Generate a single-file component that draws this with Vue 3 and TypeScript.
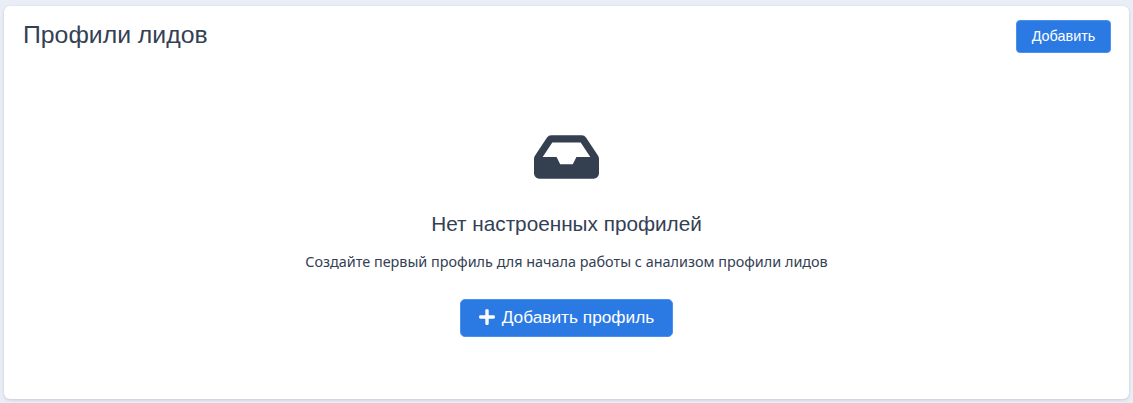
<script setup lang="ts">
const title = 'Профили лидов'
</script>

<template>
  <div class="page">
    <section class="card">
      <header class="card-header">
        <h1 class="card-title">{{ title }}</h1>
        <button class="btn btn--small" type="button">Добавить</button>
      </header>
      <div class="empty">
        <svg class="empty-icon" viewBox="0 0 576 512" aria-hidden="true">
          <path fill="currentColor" d="M567.938 243.908L462.25 85.374A48.003 48.003 0 0 0 422.311 64H153.689a48 48 0 0 0-39.938 21.374L8.062 243.908A47.994 47.994 0 0 0 0 270.533V400c0 26.51 21.49 48 48 48h480c26.51 0 48-21.49 48-48V270.533a47.994 47.994 0 0 0-8.062-26.625zM162.252 128h251.497l85.333 128H376l-32 64H232l-32-64H76.918l85.334-128z" />
        </svg>
        <h2 class="empty-title">Нет настроенных профилей</h2>
        <p class="empty-text">Создайте первый профиль для начала работы с анализом профили лидов</p>
        <button class="btn btn--large" type="button">
          <svg class="btn-icon" viewBox="0 0 448 512" aria-hidden="true">
            <path fill="currentColor" d="M416 208H272V64c0-17.67-14.33-32-32-32h-32c-17.67 0-32 14.33-32 32v144H32c-17.67 0-32 14.33-32 32v32c0 17.67 14.33 32 32 32h144v144c0 17.67 14.33 32 32 32h32c17.67 0 32-14.33 32-32V304h144c17.67 0 32-14.33 32-32v-32c0-17.67-14.33-32-32-32z" />
          </svg>
          Добавить профиль
        </button>
      </div>
    </section>
  </div>
</template>

<style>
html,
body {
  margin: 0;
  background: #e9edf5;
}
</style>

<style scoped>
.page {
  height: 403px;
  box-sizing: border-box;
  padding: 6px 4px 4px;
  font-family: 'Liberation Sans', Arial, sans-serif;
  color: #344054;
}

.card {
  height: 393px;
  box-sizing: border-box;
  padding: 14px 18px 0;
  background: #fff;
  border-radius: 6px;
  box-shadow: 0 1px 3px rgba(54, 63, 79, 0.2);
}

.card-header {
  display: flex;
  justify-content: space-between;
  align-items: flex-start;
}

.card-title {
  margin: 1px 0 0 1px;
  font-size: 24.8px;
  font-weight: 400;
  line-height: 28px;
}

.btn {
  display: inline-flex;
  align-items: center;
  justify-content: center;
  padding: 0 0 2px;
  border: 1px solid #4a90ee;
  background: #2b7ae4;
  color: #fff;
  font-family: inherit;
  border-radius: 4px;
  cursor: pointer;
}

.btn--small {
  width: 95px;
  height: 33px;
  font-size: 14.4px;
}

.btn--large {
  width: 213px;
  height: 38px;
  gap: 7px;
  font-size: 17.28px;
  border-radius: 5px;
}

.btn-icon {
  width: 16px;
  height: 18px;
}

.empty {
  display: flex;
  flex-direction: column;
  align-items: center;
  padding-top: 75px;
}

.empty-icon {
  width: 65px;
  height: 58px;
  color: #343f50;
}

.empty-title {
  margin: 26px 0 0;
  font-size: 20.74px;
  font-weight: 400;
  line-height: 24px;
}

.empty-text {
  margin: 17px 0 0;
  font-size: 14.4px;
  line-height: 18px;
  font-family: 'Noto Sans', sans-serif;
}

.empty .btn--large {
  margin-top: 28px;
}
</style>
